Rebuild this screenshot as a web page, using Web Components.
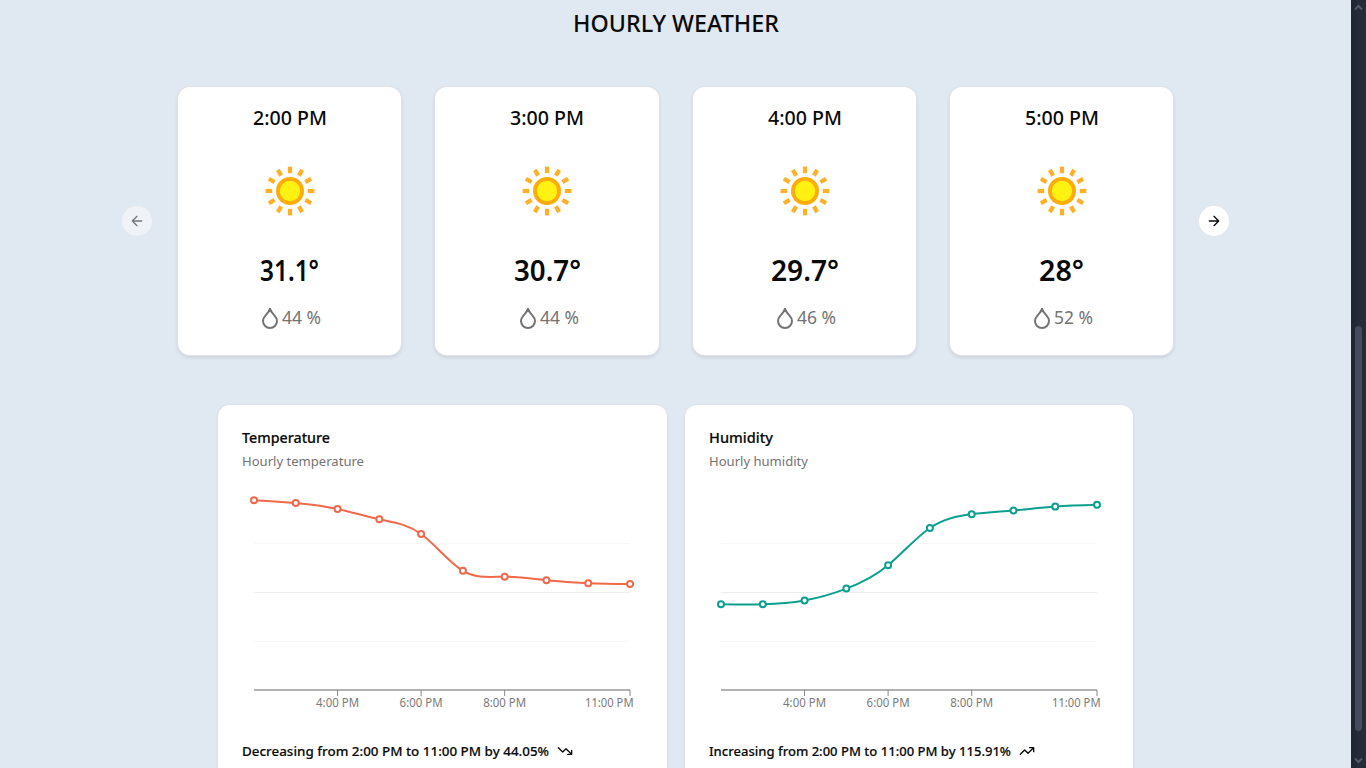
<!DOCTYPE html>
<html lang="en">
<head>
<meta charset="utf-8">
<title>Hourly weather</title>
<style>
html,body{margin:0;height:100%;overflow:hidden;background:#e0e8f1}
body{font-family:"Noto Sans","Open Sans",sans-serif;color:#0a0a0a}
</style>
</head>
<body>
<weather-page></weather-page>
<script>
const define = (name, html, setup) => customElements.define(name, class extends HTMLElement {
  connectedCallback() {
    if (this.shadowRoot) return;
    const root = this.attachShadow({mode: 'open'});
    root.innerHTML = typeof html === 'function' ? html(this) : html;
    if (setup) setup(this, root);
  }
});

/* One line of text, condensed or widened to a given width. */
define('fit-text', el => `<style>
  :host{display:block;width:${el.getAttribute('width')}px;flex:none;white-space:nowrap}
  span{display:inline-block;transform-origin:0 50%}
</style><span>${el.getAttribute('text')}</span>`, (el, root) => {
  const s = root.querySelector('span');
  s.style.transform = `scaleX(${el.getAttribute('width') / s.getBoundingClientRect().width})`;
});

define('sun-icon', () => {
  let rays = '';
  for (let i = 0; i < 12; i++) rays += `<line x1="0" y1="-17.8" x2="0" y2="-24.4" transform="rotate(${i * 30})"/>`;
  return `<style>:host{display:block;width:64px;height:64px}svg{display:block}</style>
  <svg width="64" height="64" viewBox="-32 -32 64 64"><g stroke="#ffb028" stroke-width="4.2">${rays}</g>
  <circle r="12.1" fill="#fff212" stroke="#ffab0a" stroke-width="3.8"/></svg>`;
});

define('hour-card', el => {
  const [hw, tw, pw] = el.getAttribute('widths').split(',');
  const a = n => el.getAttribute(n);
  return `<style>
  :host{display:flex;flex-direction:column;align-items:center;box-sizing:border-box;height:268px;padding-top:16px;
    background:#fff;border-radius:12px;box-shadow:0 0 0 1px #dfe3e8,0 2px 4px rgba(0,0,0,.13)}
  .hour{font-size:19.5px;line-height:30px;font-weight:500}
  sun-icon{margin-top:26px}
  .temp{font-size:28.8px;line-height:40px;font-weight:600;margin-top:27px}
  .hum{display:flex;align-items:center;font-size:17.2px;line-height:28px;color:#737373;margin-top:14px}
  svg{display:block}
  </style>
  <fit-text class="hour" width="${hw}" text="${a('hour')}"></fit-text>
  <sun-icon></sun-icon>
  <fit-text class="temp" width="${tw}" text="${a('temp')}"></fit-text>
  <div class="hum"><svg width="24" height="24" viewBox="0 0 24 24" fill="none" stroke="#737373" stroke-width="2" stroke-linecap="round" stroke-linejoin="round"><path d="M12 2.800c-.6 2.600-2.500 4.500-4.400 6.600C6 11.200 5 12.900 5 15a7 7 0 0 0 14 0c0-2.100-1-3.800-2.600-5.600C14.500 7.300 12.600 5.400 12 2.800z"/></svg><fit-text width="${pw}" text="${a('humidity')}"></fit-text></div>`;
});

define('nav-button', el => {
  const left = el.getAttribute('dir') === 'left';
  return `<style>
  :host{display:grid;place-items:center;width:30px;height:30px;border-radius:50%;background:#fff;box-shadow:0 0 0 1px #e4e8ed}
  :host([disabled]){opacity:.5}
  svg{display:block}
  </style><svg width="16" height="16" viewBox="0 0 24 24" fill="none" stroke="#0a0a0a" stroke-width="2" stroke-linecap="round" stroke-linejoin="round">
  <path d="${left ? 'm12 19-7-7 7-7M19 12H5' : 'M5 12h14m-7-7 7 7-7 7'}"/></svg>`;
});

/* Natural cubic spline through evenly spaced points. */
function spline(p) {
  const n = p.length, h = p[1][0] - p[0][0], c = [], r = [], m = [];
  for (let i = 0; i < n; i++) {
    const edge = i === 0 || i === n - 1;
    const rhs = 3 * (p[Math.min(i + 1, n - 1)][1] - p[Math.max(i - 1, 0)][1]) / h;
    const den = (edge ? 2 : 4) - (i ? c[i - 1] : 0);
    c[i] = 1 / den;
    r[i] = (rhs - (i ? r[i - 1] : 0)) / den;
  }
  m[n - 1] = r[n - 1];
  for (let i = n - 2; i >= 0; i--) m[i] = r[i] - c[i] * m[i + 1];
  let s = `M${p[0]}`;
  for (let i = 0; i < n - 1; i++) {
    s += `C${p[i][0] + h / 3},${p[i][1] + h / 3 * m[i]} ${p[i + 1][0] - h / 3},${p[i + 1][1] - h / 3 * m[i + 1]} ${p[i + 1]}`;
  }
  return s;
}

define('line-chart', el => {
  const color = el.getAttribute('color');
  const pts = el.getAttribute('values').split(',').map((v, i) => [12 + i * 41.78, +v]);
  const ticks = [[2, '4:00 PM', 43], [4, '6:00 PM', 43], [6, '8:00 PM', 43], [9, '11:00 PM', 48.5]];
  return `<style>
  :host{display:block;height:240px}
  svg{display:block;overflow:visible}
  text{font-size:11.8px;fill:#7a7a7a}
  </style><svg width="400" height="240">
  <g stroke-width="1"><path d="M12 63.500H388M12 161.500H388" stroke="#f7f7f7"/><path d="M12 112.500H388" stroke="#eeeeee"/></g>
  <path d="M12 210H388" stroke="#999" stroke-width="1.5"/>
  ${ticks.map(([i, t, w]) => {
    const x = 12 + i * 41.78, c = i === 9 ? 367.3 : x;
    return `<path d="M${x} 210v6" stroke="#888"/><text x="${c - w / 2}" y="227" textLength="${w}" lengthAdjust="spacingAndGlyphs">${t}</text>`;
  }).join('')}
  <path d="${spline(pts)}" fill="none" stroke="${color}" stroke-width="2"/>
  ${pts.map(p => `<circle cx="${p[0]}" cy="${p[1]}" r="3" fill="#fff" stroke="${color}" stroke-width="2"/>`).join('')}
  </svg>`;
});

define('chart-card', el => {
  const a = n => el.getAttribute(n), [w1, w2, w3] = a('widths').split(',');
  const up = a('trend') === 'up';
  return `<style>
  :host{display:block;box-sizing:border-box;height:400px;padding:20px 24px;background:#fff;border-radius:12px;box-shadow:0 0 0 1px #dde2e9,0 1px 3px rgba(0,0,0,.1)}
  .title{font-size:15px;line-height:24px;font-weight:500;-webkit-text-stroke:.2px}
  .sub{font-size:13.4px;line-height:24px;color:#737373}
  slot{display:block;margin-top:7px}
  footer{display:flex;align-items:center;gap:8px;font-size:13.2px;line-height:20px;font-weight:500;margin-top:21px;-webkit-text-stroke:.15px}
  svg{display:block}
  </style>
  <fit-text class="title" width="${w1}" text="${a('heading')}"></fit-text>
  <fit-text class="sub" width="${w2}" text="${a('sub')}"></fit-text>
  <slot></slot>
  <footer><fit-text width="${w3}" text="${a('summary')}"></fit-text>
  <svg width="16" height="16" viewBox="0 0 24 24" fill="none" stroke="#0a0a0a" stroke-width="2" stroke-linecap="round" stroke-linejoin="round">
  <path d="${up ? 'm22 7-8.500 8.500-5-5L2 17M16 7h6v6' : 'm22 17-8.500-8.500-5 5L2 7M16 17h6v-6'}"/></svg></footer>`;
});

define('scroll-bar', `<style>
  :host{display:flex;flex-direction:column;align-items:center;width:15px;height:768px;background:linear-gradient(90deg,#1e2632,#252b37 50%)}
  svg{display:block;width:9px;height:7px;margin-top:4px}
  .thumb{width:7px;height:405px;border-radius:3.500px;background:#444b5d;margin-top:315px}
  svg:last-child{margin-top:26px}
  </style>
  <svg viewBox="0 0 9 7" fill="none" stroke="#535a67" stroke-width="2"><path d="M1 5.500 4.500 2 8 5.500"/></svg>
  <div class="thumb"></div>
  <svg viewBox="0 0 9 7" fill="none" stroke="#535a67" stroke-width="2"><path d="M1 1.500 4.500 5 8 1.500"/></svg>`);

define('weather-page', `<style>
  :host{display:grid;grid-template-columns:1351px 15px;height:768px;overflow:hidden}
  main{display:flex;flex-direction:column;align-items:center;height:768px;overflow:hidden}
  .head{font-size:23.500px;line-height:32px;font-weight:500;margin-top:7px}
  .row{display:grid;grid-template-columns:30px 995px 30px;column-gap:26px;align-items:center;margin-top:48px}
  .cards{display:grid;grid-template-columns:223px 224px 223px 223px;column-gap:34px}
  .charts{display:grid;grid-template-columns:449px 448px;gap:18px;margin-top:50px}
  </style>
  <main>
  <fit-text class="head" width="206" text="HOURLY WEATHER"></fit-text>
  <section class="row">
    <nav-button dir="left" disabled></nav-button>
    <div class="cards">
      <hour-card hour="2:00 PM" temp="31.1°" humidity="44 %" widths="74,59,39"></hour-card>
      <hour-card hour="3:00 PM" temp="30.7°" humidity="44 %" widths="74,67,39"></hour-card>
      <hour-card hour="4:00 PM" temp="29.7°" humidity="46 %" widths="74,68,39"></hour-card>
      <hour-card hour="5:00 PM" temp="28°" humidity="52 %" widths="74,45,39"></hour-card>
    </div>
    <nav-button dir="right"></nav-button>
  </section>
  <section class="charts">
    <chart-card heading="Temperature" sub="Hourly temperature" widths="88,122,307" trend="down" summary="Decreasing from 2:00 PM to 11:00 PM by 44.05%">
      <line-chart color="#f0694b" values="20.2,23,29,39.3,54,90.8,96.700,100.200,103.200,104"></line-chart>
    </chart-card>
    <chart-card heading="Humidity" sub="Hourly humidity" widths="64,99,302" trend="up" summary="Increasing from 2:00 PM to 11:00 PM by 115.91%">
      <line-chart color="#0ba08e" values="124.2,124.2,120.4,108.6,85.2,48,34.3,30.5,26.6,24.8"></line-chart>
    </chart-card>
  </section>
  </main>
  <scroll-bar></scroll-bar>`);
</script>
</body>
</html>
